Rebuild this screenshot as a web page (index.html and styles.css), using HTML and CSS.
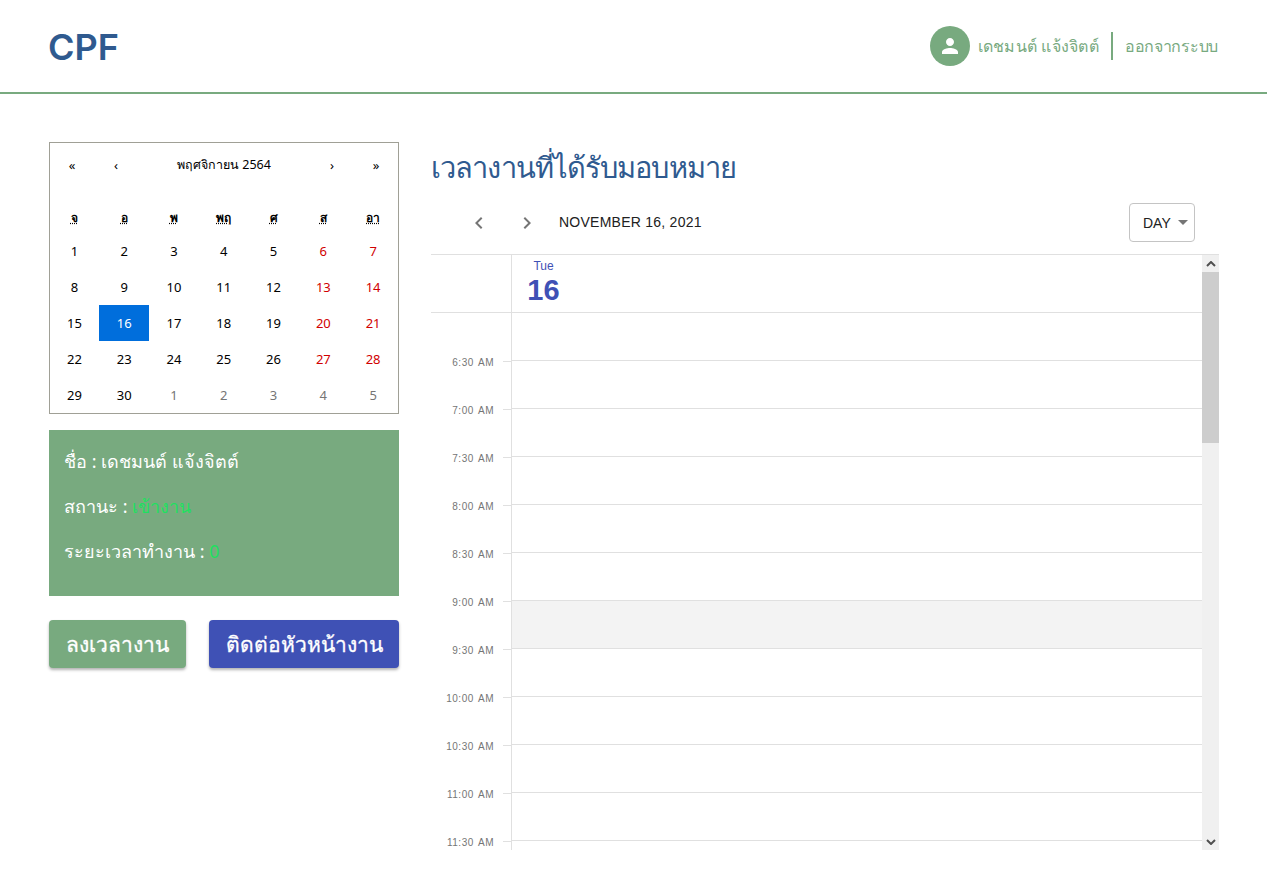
FILE: index.html
```html
<!DOCTYPE html>
<html lang="th">
<head>
    <meta charset="UTF-8">
    <meta name="viewport" content="width=device-width, initial-scale=1.0">
    <title>CPF</title>
    <link rel="stylesheet" href="styles.css">
</head>
<body>
    <div class="page">
        <header class="topbar">
            <div class="logo">CPF</div>
            <div class="user-box">
                <div class="avatar">
                    <svg viewBox="0 0 24 24" width="24" height="24"><path fill="#fff" d="M12 12c2.21 0 4-1.79 4-4s-1.79-4-4-4-4 1.79-4 4 1.79 4 4 4zm0 2c-2.67 0-8 1.34-8 4v2h16v-2c0-2.66-5.33-4-8-4z"/></svg>
                </div>
                <span class="user-name">เดชมนต์ แจ้งจิตต์</span>
                <span class="logout">ออกจากระบบ</span>
            </div>
        </header>

        <main class="content">
            <section class="left-col">
                <div class="calendar">
                    <div class="cal-nav">
                        <button class="cal-btn">«</button>
                        <button class="cal-btn">‹</button>
                        <button class="cal-btn cal-label">พฤศจิกายน 2564</button>
                        <button class="cal-btn">›</button>
                        <button class="cal-btn">»</button>
                    </div>
                    <div class="cal-weekdays">
                        <div><abbr title="จันทร์">จ</abbr></div>
                        <div><abbr title="อังคาร">อ</abbr></div>
                        <div><abbr title="พุธ">พ</abbr></div>
                        <div><abbr title="พฤหัสบดี">พฤ</abbr></div>
                        <div><abbr title="ศุกร์">ศ</abbr></div>
                        <div><abbr title="เสาร์">ส</abbr></div>
                        <div><abbr title="อาทิตย์">อา</abbr></div>
                    </div>
                    <div class="cal-days">
                        <div class="tile">1</div><div class="tile">2</div><div class="tile">3</div><div class="tile">4</div><div class="tile">5</div><div class="tile weekend">6</div><div class="tile weekend">7</div>
                        <div class="tile">8</div><div class="tile">9</div><div class="tile">10</div><div class="tile">11</div><div class="tile">12</div><div class="tile weekend">13</div><div class="tile weekend">14</div>
                        <div class="tile">15</div><div class="tile active">16</div><div class="tile">17</div><div class="tile">18</div><div class="tile">19</div><div class="tile weekend">20</div><div class="tile weekend">21</div>
                        <div class="tile">22</div><div class="tile">23</div><div class="tile">24</div><div class="tile">25</div><div class="tile">26</div><div class="tile weekend">27</div><div class="tile weekend">28</div>
                        <div class="tile">29</div><div class="tile">30</div><div class="tile other">1</div><div class="tile other">2</div><div class="tile other">3</div><div class="tile other">4</div><div class="tile other">5</div>
                    </div>
                </div>

                <div class="status-card">
                    <p>ชื่อ : เดชมนต์ แจ้งจิตต์</p>
                    <p>สถานะ : <span class="status-val">เข้างาน</span></p>
                    <p>ระยะเวลาทำงาน : <span class="status-val">0</span></p>
                </div>

                <div class="actions">
                    <button class="action-btn green">ลงเวลางาน</button>
                    <button class="action-btn blue">ติดต่อหัวหน้างาน</button>
                </div>
            </section>

            <section class="right-col">
                <h1 class="page-title">เวลางานที่ได้รับมอบหมาย</h1>

                <div class="toolbar">
                    <button class="nav-arrow">
                        <svg viewBox="0 0 24 24" width="24" height="24"><path fill="#757575" d="M15.41 7.41 14 6l-6 6 6 6 1.41-1.41L10.83 12z"/></svg>
                    </button>
                    <button class="nav-arrow">
                        <svg viewBox="0 0 24 24" width="24" height="24"><path fill="#757575" d="M10 6 8.59 7.41 13.17 12l-4.58 4.59L10 18l6-6z"/></svg>
                    </button>
                    <span class="date-label">NOVEMBER 16, 2021</span>
                    <div class="view-select">DAY<span class="caret"></span></div>
                </div>

                <div class="scheduler">
                    <div class="sched-main">
                        <div class="sched-head">
                            <div class="head-spacer"></div>
                            <div class="head-day">
                                <div class="day-block">
                                    <div class="day-name">Tue</div>
                                    <div class="day-num">16</div>
                                </div>
                            </div>
                        </div>
                        <div class="sched-body">
                            <div class="time-col">
                                <div class="time-label">6:30 AM</div>
                                <div class="time-label">7:00 AM</div>
                                <div class="time-label">7:30 AM</div>
                                <div class="time-label">8:00 AM</div>
                                <div class="time-label">8:30 AM</div>
                                <div class="time-label">9:00 AM</div>
                                <div class="time-label">9:30 AM</div>
                                <div class="time-label">10:00 AM</div>
                                <div class="time-label">10:30 AM</div>
                                <div class="time-label">11:00 AM</div>
                                <div class="time-label">11:30 AM</div>
                            </div>
                            <div class="cell-col">
                                <div class="cell"></div>
                                <div class="cell"></div>
                                <div class="cell"></div>
                                <div class="cell"></div>
                                <div class="cell"></div>
                                <div class="cell"></div>
                                <div class="cell shaded"></div>
                                <div class="cell"></div>
                                <div class="cell"></div>
                                <div class="cell"></div>
                                <div class="cell"></div>
                                <div class="cell"></div>
                            </div>
                        </div>
                    </div>
                    <div class="scrollbar">
                        <div class="scroll-arrow">
                            <svg viewBox="0 0 10 6" width="10" height="6"><path fill="none" stroke="#505050" stroke-width="2" d="M1 5l4-4 4 4"/></svg>
                        </div>
                        <div class="scroll-thumb"></div>
                        <div class="scroll-track"></div>
                        <div class="scroll-arrow">
                            <svg viewBox="0 0 10 6" width="10" height="6"><path fill="none" stroke="#505050" stroke-width="2" d="M1 1l4 4 4-4"/></svg>
                        </div>
                    </div>
                </div>
            </section>
        </main>
    </div>
</body>
</html>
```

FILE: styles.css
```css
html, body {
    margin: 0;
    padding: 0;
    background: #fff;
}
body {
    font-family: "Noto Sans", "Liberation Sans", sans-serif;
    overflow: hidden;
}
.page {
    width: 1267px;
}
button {
    font-family: inherit;
    border: none;
    background: none;
    padding: 0;
    margin: 0;
}

/* Header */
.topbar {
    height: 92px;
    border-bottom: 2px solid #78aa7f;
    display: flex;
    align-items: center;
    justify-content: space-between;
    padding: 0 49px 0 48px;
    box-sizing: content-box;
}
.logo {
    font-family: Inter, "Noto Sans", sans-serif;
    font-size: 36px;
    font-weight: 600;
    color: #2f5a8f;
    margin-top: 2px;
}
.user-box {
    display: flex;
    align-items: center;
    color: #78aa7f;
    font-size: 16px;
}
.avatar {
    width: 40px;
    height: 40px;
    border-radius: 50%;
    background: #78aa7f;
    display: flex;
    align-items: center;
    justify-content: center;
    margin-right: 8px;
}
.user-name {
    padding-right: 12px;
    border-right: 2px solid #78aa7f;
    line-height: 28px;
    letter-spacing: 0.25px;
}
.logout {
    padding-left: 12px;
    letter-spacing: -0.3px;
}

/* Main layout */
.content {
    display: flex;
    padding: 48px 48px 0 49px;
    gap: 32px;
}
.left-col {
    width: 350px;
    flex-shrink: 0;
}
.right-col {
    flex: 1;
    min-width: 0;
}

/* Calendar */
.calendar {
    border: 1px solid #a0a096;
    box-sizing: border-box;
    height: 272px;
    font-size: 13px;
    color: #000;
}
.cal-nav {
    display: flex;
    height: 44px;
    margin-bottom: 16px;
}
.cal-btn {
    width: 44px;
    font-size: 13px;
    color: #000;
}
.cal-label {
    flex: 1;
    font-size: 12.5px;
}
.cal-weekdays {
    display: grid;
    grid-template-columns: repeat(7, 1fr);
    height: 28px;
    align-items: center;
    text-align: center;
    font-size: 12px;
    font-weight: 700;
    margin: 2px 0 2px -0.5px;
}
.cal-days {
    display: grid;
    grid-template-columns: repeat(7, 1fr);
    grid-auto-rows: 36px;
    margin-left: -0.5px;
}
.tile {
    display: flex;
    align-items: center;
    justify-content: center;
}
.weekend {
    color: #d10000;
}
.other {
    color: #757575;
}
.active {
    background: #006edc;
    color: #fff;
}

/* Status card */
.status-card {
    margin-top: 16px;
    height: 166px;
    box-sizing: border-box;
    background: #78aa7f;
    color: #fff;
    padding: 9px 15px;
    font-size: 18px;
}
.status-card p {
    margin: 0;
    height: 45px;
    line-height: 45px;
}
.status-val {
    color: #1fe060;
}

/* Buttons */
.actions {
    display: flex;
    justify-content: space-between;
    margin-top: 24px;
}
.action-btn {
    height: 48px;
    border-radius: 4px;
    color: #fff;
    font-size: 21px;
    -webkit-text-stroke: 0.3px #fff;
    box-shadow: 0 2px 3px rgba(0, 0, 0, 0.3);
}
.action-btn.green {
    width: 137px;
    background: #78aa7f;
}
.action-btn.blue {
    width: 190px;
    background: #3f51b5;
}

/* Scheduler title and toolbar */
.page-title {
    margin: 0;
    height: 52px;
    line-height: 49px;
    font-size: 29px;
    font-weight: 400;
    letter-spacing: -0.9px;
    color: #2f5a8f;
}
.toolbar {
    display: flex;
    align-items: center;
    height: 57px;
    margin-bottom: 3px;
    padding-left: 24px;
    padding-right: 24px;
    font-family: "Liberation Sans", Arial, sans-serif;
}
.nav-arrow {
    width: 48px;
    height: 48px;
    display: flex;
    align-items: center;
    justify-content: center;
}
.date-label {
    font-size: 14px;
    letter-spacing: 0.25px;
    color: #212121;
    margin-left: 8px;
    margin-bottom: 2px;
}
.view-select {
    margin-left: auto;
    width: 66px;
    height: 39px;
    box-sizing: border-box;
    border: 1px solid #c4c4c4;
    border-radius: 4px;
    display: flex;
    align-items: center;
    padding-left: 13px;
    font-size: 14px;
    color: #212121;
}
.caret {
    margin-left: 7px;
    border-left: 5px solid transparent;
    border-right: 5px solid transparent;
    border-top: 5px solid #757575;
}

/* Scheduler */
.scheduler {
    display: flex;
    height: 596px;
    border-top: 1px solid #e0e0e0;
    box-sizing: border-box;
    font-family: "Liberation Sans", Arial, sans-serif;
}
.sched-main {
    flex: 1;
    min-width: 0;
    overflow: hidden;
}
.sched-head {
    display: flex;
    height: 57px;
    border-bottom: 1px solid #e0e0e0;
}
.head-spacer {
    width: 80px;
    border-right: 1px solid #e0e0e0;
}
.head-day {
    padding-left: 15px;
}
.day-block {
    width: 33px;
    text-align: center;
    color: #3f51b5;
}
.day-name {
    font-size: 12px;
    margin-top: 4px;
    line-height: 14px;
}
.day-num {
    font-size: 29px;
    font-weight: 700;
    line-height: 34px;
}
.sched-body {
    display: flex;
}
.time-col {
    width: 80px;
    padding-top: 24px;
    border-right: 1px solid #e0e0e0;
}
.time-label {
    height: 48px;
    box-sizing: border-box;
    padding-top: 2px;
    display: flex;
    align-items: center;
    justify-content: flex-end;
    font-size: 10px;
    letter-spacing: 0.5px;
    word-spacing: 1.5px;
    color: #757575;
}
.time-label::after {
    content: "";
    width: 8px;
    height: 1px;
    background: #e0e0e0;
    margin-left: 9px;
    margin-bottom: 2px;
}
.cell-col {
    flex: 1;
}
.cell {
    height: 48px;
    box-sizing: border-box;
    border-bottom: 1px solid #e0e0e0;
}
.cell.shaded {
    background: #f3f3f3;
}

/* Scrollbar */
.scrollbar {
    width: 17px;
    display: flex;
    flex-direction: column;
    background: #f0f0f0;
}
.scroll-arrow {
    height: 17px;
    display: flex;
    align-items: center;
    justify-content: center;
}
.scroll-thumb {
    height: 171px;
    background: #cdcdcd;
}
.scroll-track {
    flex: 1;
}
```
